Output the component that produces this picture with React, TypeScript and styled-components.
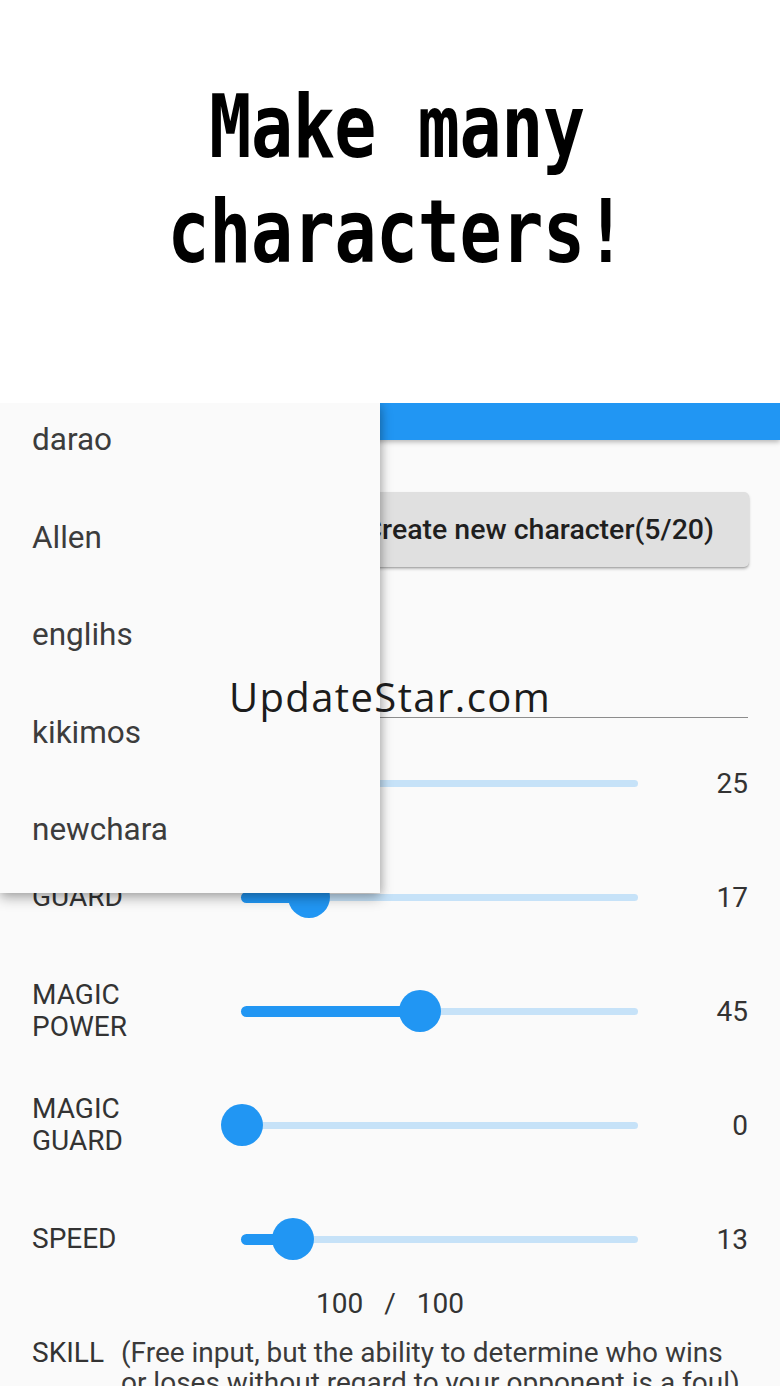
import React from "react";
import styled, { createGlobalStyle } from "styled-components";

const Global = createGlobalStyle`
  html, body { margin: 0; padding: 0; background: #ffffff; }
  body { font-family: Roboto, "Liberation Sans", sans-serif; }
  * { box-sizing: border-box; }
`;

const Page = styled.div`
  width: 780px;
  height: 1386px;
  overflow: hidden;
  position: relative;
  background: #ffffff;
`;

const Header = styled.header`
  height: 403px;
  padding-top: 74px;
  padding-left: 14px;
  background: #ffffff;
`;

const Title = styled.h1`
  margin: 0;
  font-family: "DejaVu Sans Mono", "Liberation Mono", monospace;
  font-weight: 700;
  font-size: 70px;
  line-height: 84px;
  letter-spacing: -0.4px;
  color: #000;
  text-align: center;
  transform: scaleY(1.25);
  transform-origin: top center;
`;

const Phone = styled.section`
  position: relative;
  height: 983px;
  background: #fafafa;
  overflow: hidden;
`;

const AppBar = styled.div`
  height: 37px;
  background: #2196f3;
  box-shadow: 0 2px 5px rgba(0, 0, 0, 0.28);
  position: relative;
  z-index: 1;
`;

const Body = styled.div`
  padding: 0 32px;
  display: flex;
  flex-direction: column;
`;

const ButtonRow = styled.div`
  margin-top: 52px;
  display: flex;
  justify-content: flex-end;
  margin-right: -1px;
`;

const RaisedButton = styled.button`
  height: 75px;
  padding: 0 35px;
  border: none;
  border-radius: 5px;
  background: #e0e0e0;
  color: #1f1f1f;
  font-family: Roboto, "Liberation Sans", sans-serif;
  font-weight: 500;
  font-size: 28.5px;
  box-shadow: 0 2px 3px rgba(0, 0, 0, 0.25), 0 1px 1px rgba(0, 0, 0, 0.12);
`;

const TextField = styled.div`
  height: 151px;
  border-bottom: 1px solid #8c8c8c;
`;

const Sliders = styled.div`
  margin-top: 15px;
  display: flex;
  flex-direction: column;
  gap: 14px;
`;

const Row = styled.div`
  height: 100px;
  display: flex;
  align-items: center;
`;

const Label = styled.div`
  width: 189px;
  font-size: 28px;
  line-height: 32px;
  color: #333;
`;

const SliderBox = styled.div`
  width: 438px;
  padding: 0 21px;
  height: 44px;
  display: flex;
  align-items: center;
`;

const Track = styled.div`
  position: relative;
  flex: 1;
  height: 7px;
  border-radius: 4px;
  background: #c6e2f8;
`;

const Active = styled.div`
  position: absolute;
  left: -1px;
  top: -2px;
  height: 11px;
  border-radius: 6px;
  background: #2196f3;
`;

const Thumb = styled.div`
  position: absolute;
  top: 50%;
  width: 42px;
  height: 42px;
  border-radius: 50%;
  background: #2196f3;
  transform: translate(-50%, -50%);
`;

const Value = styled.div`
  flex: 1;
  text-align: right;
  font-size: 28px;
  color: #333;
`;

const Total = styled.div`
  height: 30px;
  line-height: 30px;
  text-align: center;
  font-size: 28px;
  color: #333;
  word-spacing: 14px;
`;

const SkillRow = styled.div`
  margin-top: 19px;
  display: flex;
  gap: 17px;
  font-size: 28px;
  line-height: 30px;
  color: #333;
`;

const SkillText = styled.div`
  flex: 1;
  color: #3a3a3a;
`;

const Menu = styled.div`
  position: absolute;
  left: 0;
  top: 0;
  width: 380px;
  height: 490px;
  background: #fafafa;
  box-shadow: 0 5px 12px rgba(0, 0, 0, 0.3), 2px 0 8px rgba(0, 0, 0, 0.12);
  overflow: hidden;
  z-index: 3;
`;

const MenuList = styled.ul`
  list-style: none;
  margin: -12px 0 0;
  padding: 0;
`;

const MenuItem = styled.li`
  height: 97.5px;
  display: flex;
  align-items: center;
  padding-left: 32px;
  font-size: 31.5px;
  color: #3c3c3c;
`;

const Watermark = styled.div`
  position: absolute;
  left: 0;
  right: 0;
  top: 677px;
  text-align: center;
  font-family: "Open Sans", "Noto Sans", sans-serif;
  font-size: 40px;
  line-height: 40px;
  letter-spacing: 1.4px;
  color: #1c1c1c;
  z-index: 5;
`;

const stats: { label: string[]; value: number }[] = [
  { label: ["POWER"], value: 25 },
  { label: ["GUARD"], value: 17 },
  { label: ["MAGIC", "POWER"], value: 45 },
  { label: ["MAGIC", "GUARD"], value: 0 },
  { label: ["SPEED"], value: 13 },
];

const names = ["darao", "Allen", "englihs", "kikimos", "newchara"];

export default function App() {
  return (
    <Page>
      <Global />
      <Header>
        <Title>
          Make many
          <br />
          characters!
        </Title>
      </Header>
      <Phone>
        <AppBar />
        <Body>
          <ButtonRow>
            <RaisedButton>Create new character(5/20)</RaisedButton>
          </ButtonRow>
          <TextField />
          <Sliders>
            {stats.map((s) => (
              <Row key={s.label.join(" ")}>
                <Label>
                  {s.label.map((l, i) => (
                    <div key={i}>{l}</div>
                  ))}
                </Label>
                <SliderBox>
                  <Track>
                    {s.value > 0 && (
                      <Active style={{ width: `calc(${s.value}% + 1px)` }} />
                    )}
                    <Thumb style={{ left: `${s.value}%` }} />
                  </Track>
                </SliderBox>
                <Value>{s.value}</Value>
              </Row>
            ))}
          </Sliders>
          <Total>100 / 100</Total>
          <SkillRow>
            <span>SKILL</span>
            <SkillText>
              (Free input, but the ability to determine who wins or loses without
              regard to your opponent is a foul)
            </SkillText>
          </SkillRow>
        </Body>
        <Menu>
          <MenuList>
            {names.map((n) => (
              <MenuItem key={n}>{n}</MenuItem>
            ))}
          </MenuList>
        </Menu>
      </Phone>
      <Watermark>UpdateStar.com</Watermark>
    </Page>
  );
}
